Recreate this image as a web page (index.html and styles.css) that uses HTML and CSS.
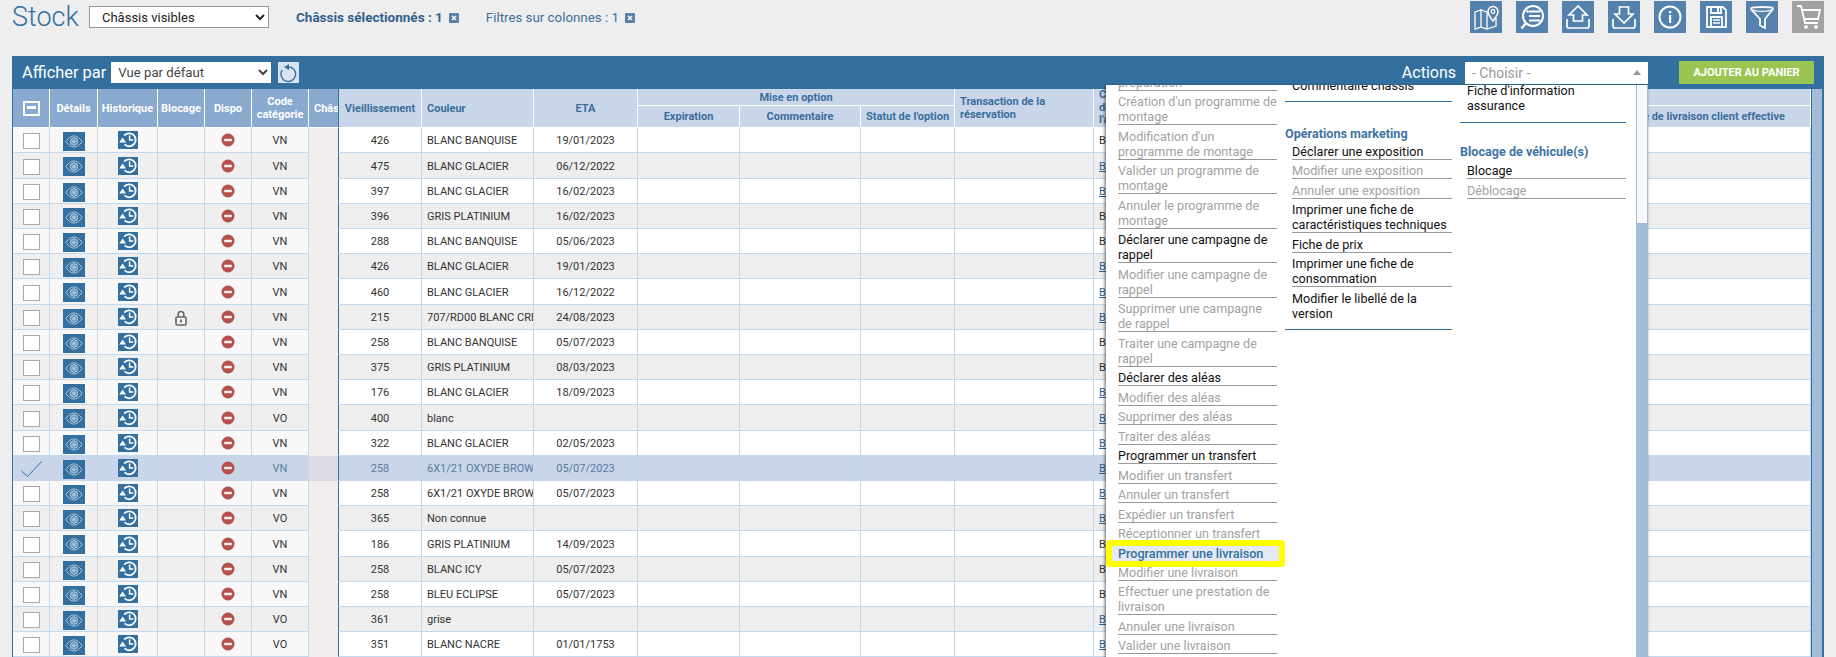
FILE: index.html
```html
<!DOCTYPE html>
<html lang="fr">
<head>
<meta charset="utf-8">
<title>Stock</title>
<link rel="stylesheet" href="styles.css">
</head>
<body>
<svg class="defs" width="0" height="0" aria-hidden="true">
  <defs>
    <symbol id="i-eye" viewBox="0 0 22 19">
      <path d="M3 9.500C6 5.200 8.500 4 11 4s5 1.200 8 5.500C16 13.800 13.500 15 11 15s-5-1.200-8-5.500z" fill="none" stroke="#b4cbde" stroke-width="1"/>
      <circle cx="11" cy="9.500" r="3.800" fill="#6f9abd" stroke="#b4cbde" stroke-width="1"/>
      <circle cx="11" cy="9.500" r="1.800" fill="#a9c3d9"/>
    </symbol>
    <symbol id="i-hist" viewBox="0 0 20 18">
      <path d="M6.200 4.600A6.500 6.500 0 1 1 6.600 13.400" fill="none" stroke="#fff" stroke-width="1.800"/>
      <path d="M4.600 6.600L1.200 11.400h6.800z" fill="#fff"/>
      <path d="M11.600 4.500v4.500h3.700" fill="none" stroke="#fff" stroke-width="1.500"/>
    </symbol>
    <symbol id="i-no" viewBox="0 0 14 14">
      <circle cx="7" cy="7" r="6.500" fill="#b6504f"/>
      <rect x="3.200" y="5.700" width="7.600" height="2.600" rx=".5" fill="#f5f0f0"/>
    </symbol>
    <symbol id="i-x" viewBox="0 0 10 10">
      <rect width="10" height="10" rx="1" fill="#5f80a6"/>
      <path d="M3 3l4 4M7 3l-4 4" stroke="#fff" stroke-width="1.400"/>
    </symbol>
  </defs>
</svg>

<header class="topbar">
  <h1 class="title">Stock</h1>
  <select class="chassis-select"><option>Châssis visibles</option></select>
  <span class="tag tag-strong">Châssis sélectionnés : 1</span>
  <svg class="tag-x"><use href="#i-x"/></svg>
  <span class="tag tag-second">Filtres sur colonnes : 1</span>
  <svg class="tag-x"><use href="#i-x"/></svg>
  <nav class="tools">
    <button class="tool"><svg viewBox="0 0 32 32"><g fill="none" stroke="#fff" stroke-width="1.300"><path d="M5 11l6-2v17l-6 2zM11 9l6 2v17l-6-2zM17 28l9-3v-8"/><path d="M23 20c-3-4-5-6.500-5-9.500a5 5 0 0 1 10 0c0 3-2 5.500-5 9.500z" stroke-width="1.500"/><circle cx="23" cy="10.500" r="1.800"/></g></svg></button>
    <button class="tool"><svg viewBox="0 0 32 32"><g fill="none" stroke="#fff" stroke-width="2"><circle cx="17" cy="15" r="10"/><path d="M10 22l-4.500 5.500" stroke-width="2.400"/></g><path d="M13 10.500h11M13 15h11M13 19.500h11" stroke="#fff" stroke-width="1.800"/><circle cx="11.500" cy="10.500" r="1.200" fill="#fff"/></svg></button>
    <button class="tool"><svg viewBox="0 0 32 32"><g fill="none" stroke="#fff" stroke-width="1.700"><path d="M5 18v7a2 2 0 0 0 2 2h18a2 2 0 0 0 2-2v-7"/><path d="M16 5L7 14h4.500v6h9v-6H25z"/></g></svg></button>
    <button class="tool"><svg viewBox="0 0 32 32"><g fill="none" stroke="#fff" stroke-width="1.700"><path d="M5 18v7a2 2 0 0 0 2 2h18a2 2 0 0 0 2-2v-7"/><path d="M16 22L7 13h4.500V6h9v7H25z"/></g></svg></button>
    <button class="tool"><svg viewBox="0 0 32 32"><circle cx="16" cy="16" r="10.500" fill="none" stroke="#fff" stroke-width="2"/><rect x="15" y="14" width="2.200" height="8" fill="#fff"/><rect x="15" y="10" width="2.200" height="2.200" fill="#fff"/></svg></button>
    <button class="tool"><svg viewBox="0 0 32 32"><g fill="none" stroke="#fff" stroke-width="1.800"><path d="M7 6h16l3 3v17H7z"/><path d="M11 6v6h10V6M11 26V16h11v10"/></g><path d="M13 19h7M13 22h7" stroke="#fff" stroke-width="1.300"/><rect x="17" y="7" width="2" height="4" fill="#fff"/></svg></button>
    <button class="tool"><svg viewBox="0 0 32 32"><g fill="none" stroke="#fff" stroke-width="1.800"><path d="M5 7.500C5 5.500 27 5.500 27 7.500c0 1-1 2-2 3L19 18v9l-5-2.500V18L7 10.500c-1-1-2-2-2-3z"/><path d="M5.500 8.500c5 2.500 16 2.500 21 0" stroke-width="1.300"/></g></svg></button>
    <button class="tool tool-off"><svg viewBox="0 0 32 32"><g fill="none" stroke="#fff" stroke-width="1.800"><path d="M5 5h4l4 17h13"/><path d="M10 9h18l-2 9H12"/></g><circle cx="14" cy="26" r="1.900" fill="#fff"/><circle cx="24" cy="26" r="1.900" fill="#fff"/></svg></button>
  </nav>
</header>

<main class="panel">
  <div class="panel-bar">
    <span class="bar-label">Afficher par</span>
    <select class="view-select"><option>Vue par défaut</option></select>
    <button class="refresh"><svg viewBox="0 0 21 21"><path d="M4.200 8.200A7.300 7.300 0 1 0 10.500 4.900" fill="none" stroke="#33709f" stroke-width="1.400"/><path d="M6 5l5-3v6z" fill="#33709f"/></svg></button>
    <span class="bar-label bar-actions">Actions</span>
    <div class="choose"><span>- Choisir -</span><i class="caret"></i></div>
    <button class="add-cart">AJOUTER AU PANIER</button>
  </div>

  <div class="grid-wrap">
    <table class="grid">
      <colgroup>
        <col class="c-chk"><col class="c-det"><col class="c-his"><col class="c-blo"><col class="c-dis"><col class="c-cod"><col class="c-cha"><col class="c-vie"><col class="c-cou"><col class="c-eta"><col class="c-exp"><col class="c-com"><col class="c-sta"><col class="c-tra"><col class="c-con"><col class="c-dat">
      </colgroup>
      <thead>
        <tr class="h-top">
          <th class="fz" rowspan="2"><span class="head-check"></span></th>
          <th class="fz" rowspan="2">Détails</th>
          <th class="fz" rowspan="2">Historique</th>
          <th class="fz" rowspan="2">Blocage</th>
          <th class="fz" rowspan="2">Dispo</th>
          <th class="fz" rowspan="2">Code catégorie</th>
          <th class="fz fz-end" rowspan="2">Châssis</th>
          <th class="frozen-edge" rowspan="2">Vieillissement</th>
          <th class="left" rowspan="2">Couleur</th>
          <th rowspan="2">ETA</th>
          <th colspan="3">Mise en option</th>
          <th class="left" rowspan="2">Transaction de la réservation</th>
          <th class="left con" rowspan="2">Concession<br>de<br>l'affaire</th>
          <th></th>
        </tr>
        <tr class="h-sub">
          <th>Expiration</th>
          <th>Commentaire</th>
          <th>Statut de l'option</th>
          <th>Date de livraison client effective</th>
        </tr>
      </thead>
      <tbody>
        <tr><td><span class="box"></span></td><td><svg class="tile-eye"><use href="#i-eye"/></svg></td><td><svg class="tile-his"><use href="#i-hist"/></svg></td><td></td><td><svg class="no"><use href="#i-no"/></svg></td><td>VN</td><td class="blur"></td><td class="frozen-edge">426</td><td class="left">BLANC BANQUISE</td><td>19/01/2023</td><td></td><td></td><td></td><td></td><td class="left">B</td><td></td></tr>
        <tr class="tall"><td><span class="box"></span></td><td><svg class="tile-eye"><use href="#i-eye"/></svg></td><td><svg class="tile-his"><use href="#i-hist"/></svg></td><td></td><td><svg class="no"><use href="#i-no"/></svg></td><td>VN</td><td class="blur"></td><td class="frozen-edge">475</td><td class="left">BLANC GLACIER</td><td>06/12/2022</td><td></td><td></td><td></td><td></td><td class="left"><a href="#">B</a></td><td></td></tr>
        <tr><td><span class="box"></span></td><td><svg class="tile-eye"><use href="#i-eye"/></svg></td><td><svg class="tile-his"><use href="#i-hist"/></svg></td><td></td><td><svg class="no"><use href="#i-no"/></svg></td><td>VN</td><td class="blur"></td><td class="frozen-edge">397</td><td class="left">BLANC GLACIER</td><td>16/02/2023</td><td></td><td></td><td></td><td></td><td class="left"><a href="#">B</a></td><td></td></tr>
        <tr><td><span class="box"></span></td><td><svg class="tile-eye"><use href="#i-eye"/></svg></td><td><svg class="tile-his"><use href="#i-hist"/></svg></td><td></td><td><svg class="no"><use href="#i-no"/></svg></td><td>VN</td><td class="blur"></td><td class="frozen-edge">396</td><td class="left">GRIS PLATINIUM</td><td>16/02/2023</td><td></td><td></td><td></td><td></td><td class="left">B</td><td></td></tr>
        <tr><td><span class="box"></span></td><td><svg class="tile-eye"><use href="#i-eye"/></svg></td><td><svg class="tile-his"><use href="#i-hist"/></svg></td><td></td><td><svg class="no"><use href="#i-no"/></svg></td><td>VN</td><td class="blur"></td><td class="frozen-edge">288</td><td class="left">BLANC BANQUISE</td><td>05/06/2023</td><td></td><td></td><td></td><td></td><td class="left">B</td><td></td></tr>
        <tr><td><span class="box"></span></td><td><svg class="tile-eye"><use href="#i-eye"/></svg></td><td><svg class="tile-his"><use href="#i-hist"/></svg></td><td></td><td><svg class="no"><use href="#i-no"/></svg></td><td>VN</td><td class="blur"></td><td class="frozen-edge">426</td><td class="left">BLANC GLACIER</td><td>19/01/2023</td><td></td><td></td><td></td><td></td><td class="left"><a href="#">B</a></td><td></td></tr>
        <tr class="tall"><td><span class="box"></span></td><td><svg class="tile-eye"><use href="#i-eye"/></svg></td><td><svg class="tile-his"><use href="#i-hist"/></svg></td><td></td><td><svg class="no"><use href="#i-no"/></svg></td><td>VN</td><td class="blur"></td><td class="frozen-edge">460</td><td class="left">BLANC GLACIER</td><td>16/12/2022</td><td></td><td></td><td></td><td></td><td class="left"><a href="#">B</a></td><td></td></tr>
        <tr><td><span class="box"></span></td><td><svg class="tile-eye"><use href="#i-eye"/></svg></td><td><svg class="tile-his"><use href="#i-hist"/></svg></td><td><svg class="lock" viewBox="0 0 14 16"><path d="M4.200 7V4.300a2.800 2.800 0 0 1 5.600 0V7" fill="none" stroke="#666" stroke-width="1.600"/><rect x="2" y="7" width="10" height="8" rx="1" fill="#f4f4f4" stroke="#666" stroke-width="1.600"/><path d="M7 9.500v3" stroke="#666" stroke-width="1.800"/></svg></td><td><svg class="no"><use href="#i-no"/></svg></td><td>VN</td><td class="blur"></td><td class="frozen-edge">215</td><td class="left"><span class="clip">707/RD00 BLANC CREME</span></td><td>24/08/2023</td><td></td><td></td><td></td><td></td><td class="left"><a href="#">B</a></td><td></td></tr>
        <tr><td><span class="box"></span></td><td><svg class="tile-eye"><use href="#i-eye"/></svg></td><td><svg class="tile-his"><use href="#i-hist"/></svg></td><td></td><td><svg class="no"><use href="#i-no"/></svg></td><td>VN</td><td class="blur"></td><td class="frozen-edge">258</td><td class="left">BLANC BANQUISE</td><td>05/07/2023</td><td></td><td></td><td></td><td></td><td class="left">B</td><td></td></tr>
        <tr><td><span class="box"></span></td><td><svg class="tile-eye"><use href="#i-eye"/></svg></td><td><svg class="tile-his"><use href="#i-hist"/></svg></td><td></td><td><svg class="no"><use href="#i-no"/></svg></td><td>VN</td><td class="blur"></td><td class="frozen-edge">375</td><td class="left">GRIS PLATINIUM</td><td>08/03/2023</td><td></td><td></td><td></td><td></td><td class="left">B</td><td></td></tr>
        <tr><td><span class="box"></span></td><td><svg class="tile-eye"><use href="#i-eye"/></svg></td><td><svg class="tile-his"><use href="#i-hist"/></svg></td><td></td><td><svg class="no"><use href="#i-no"/></svg></td><td>VN</td><td class="blur"></td><td class="frozen-edge">176</td><td class="left">BLANC GLACIER</td><td>18/09/2023</td><td></td><td></td><td></td><td></td><td class="left"><a href="#">B</a></td><td></td></tr>
        <tr class="tall"><td><span class="box"></span></td><td><svg class="tile-eye"><use href="#i-eye"/></svg></td><td><svg class="tile-his"><use href="#i-hist"/></svg></td><td></td><td><svg class="no"><use href="#i-no"/></svg></td><td>VO</td><td class="blur"></td><td class="frozen-edge">400</td><td class="left">blanc</td><td></td><td></td><td></td><td></td><td></td><td class="left"><a href="#">B</a></td><td></td></tr>
        <tr><td><span class="box"></span></td><td><svg class="tile-eye"><use href="#i-eye"/></svg></td><td><svg class="tile-his"><use href="#i-hist"/></svg></td><td></td><td><svg class="no"><use href="#i-no"/></svg></td><td>VN</td><td class="blur"></td><td class="frozen-edge">322</td><td class="left">BLANC GLACIER</td><td>02/05/2023</td><td></td><td></td><td></td><td></td><td class="left"><a href="#">B</a></td><td></td></tr>
        <tr class="sel"><td><svg class="tick" viewBox="0 0 21 16"><path d="M0.500 10l6 5.500L20.500 0.500" fill="none" stroke="#33709f" stroke-width="1"/></svg></td><td><svg class="tile-eye"><use href="#i-eye"/></svg></td><td><svg class="tile-his"><use href="#i-hist"/></svg></td><td></td><td><svg class="no"><use href="#i-no"/></svg></td><td>VN</td><td class="blur"></td><td class="frozen-edge">258</td><td class="left"><span class="clip">6X1/21 OXYDE BROWN</span></td><td>05/07/2023</td><td></td><td></td><td></td><td></td><td class="left"><a href="#">B</a></td><td></td></tr>
        <tr><td><span class="box"></span></td><td><svg class="tile-eye"><use href="#i-eye"/></svg></td><td><svg class="tile-his"><use href="#i-hist"/></svg></td><td></td><td><svg class="no"><use href="#i-no"/></svg></td><td>VN</td><td class="blur"></td><td class="frozen-edge">258</td><td class="left"><span class="clip">6X1/21 OXYDE BROWN</span></td><td>05/07/2023</td><td></td><td></td><td></td><td></td><td class="left"><a href="#">B</a></td><td></td></tr>
        <tr><td><span class="box"></span></td><td><svg class="tile-eye"><use href="#i-eye"/></svg></td><td><svg class="tile-his"><use href="#i-hist"/></svg></td><td></td><td><svg class="no"><use href="#i-no"/></svg></td><td>VO</td><td class="blur"></td><td class="frozen-edge">365</td><td class="left">Non connue</td><td></td><td></td><td></td><td></td><td></td><td class="left"><a href="#">B</a></td><td></td></tr>
        <tr class="tall"><td><span class="box"></span></td><td><svg class="tile-eye"><use href="#i-eye"/></svg></td><td><svg class="tile-his"><use href="#i-hist"/></svg></td><td></td><td><svg class="no"><use href="#i-no"/></svg></td><td>VN</td><td class="blur"></td><td class="frozen-edge">186</td><td class="left">GRIS PLATINIUM</td><td>14/09/2023</td><td></td><td></td><td></td><td></td><td class="left">B</td><td></td></tr>
        <tr><td><span class="box"></span></td><td><svg class="tile-eye"><use href="#i-eye"/></svg></td><td><svg class="tile-his"><use href="#i-hist"/></svg></td><td></td><td><svg class="no"><use href="#i-no"/></svg></td><td>VN</td><td class="blur"></td><td class="frozen-edge">258</td><td class="left">BLANC ICY</td><td>05/07/2023</td><td></td><td></td><td></td><td></td><td class="left">B</td><td></td></tr>
        <tr><td><span class="box"></span></td><td><svg class="tile-eye"><use href="#i-eye"/></svg></td><td><svg class="tile-his"><use href="#i-hist"/></svg></td><td></td><td><svg class="no"><use href="#i-no"/></svg></td><td>VN</td><td class="blur"></td><td class="frozen-edge">258</td><td class="left">BLEU ECLIPSE</td><td>05/07/2023</td><td></td><td></td><td></td><td></td><td class="left">B</td><td></td></tr>
        <tr><td><span class="box"></span></td><td><svg class="tile-eye"><use href="#i-eye"/></svg></td><td><svg class="tile-his"><use href="#i-hist"/></svg></td><td></td><td><svg class="no"><use href="#i-no"/></svg></td><td>VO</td><td class="blur"></td><td class="frozen-edge">361</td><td class="left">grise</td><td></td><td></td><td></td><td></td><td></td><td class="left"><a href="#">B</a></td><td></td></tr>
        <tr><td><span class="box"></span></td><td><svg class="tile-eye"><use href="#i-eye"/></svg></td><td><svg class="tile-his"><use href="#i-hist"/></svg></td><td></td><td><svg class="no"><use href="#i-no"/></svg></td><td>VO</td><td class="blur"></td><td class="frozen-edge">351</td><td class="left">BLANC NACRE</td><td>01/01/1753</td><td></td><td></td><td></td><td></td><td class="left"><a href="#">B</a></td><td></td></tr>
      </tbody>
    </table>
    <div class="grid-scroll"></div>
  </div>

  <div class="menu">
    <div class="menu-cols">
      <div class="menu-col col-a">
        <ul class="items">
          <li class="off">préparation</li>
          <li class="off">Création d'un programme de montage</li>
          <li class="off">Modification d'un programme de montage</li>
          <li class="off">Valider un programme de montage</li>
          <li class="off">Annuler le programme de montage</li>
          <li>Déclarer une campagne de rappel</li>
          <li class="off">Modifier une campagne de rappel</li>
          <li class="off">Supprimer une campagne de rappel</li>
          <li class="off">Traiter une campagne de rappel</li>
          <li>Déclarer des aléas</li>
          <li class="off">Modifier des aléas</li>
          <li class="off">Supprimer des aléas</li>
          <li class="off">Traiter des aléas</li>
          <li>Programmer un transfert</li>
          <li class="off">Modifier un transfert</li>
          <li class="off">Annuler un transfert</li>
          <li class="off">Expédier un transfert</li>
          <li class="off">Réceptionner un transfert</li>
          <li class="hot">Programmer une livraison</li>
          <li class="off">Modifier une livraison</li>
          <li class="off">Effectuer une prestation de livraison</li>
          <li class="off">Annuler une livraison</li>
          <li class="off">Valider une livraison</li>
        </ul>
      </div>
      <div class="menu-col col-b">
        <ul class="items items-end">
          <li>Commentaire châssis</li>
        </ul>
        <h3 class="group group-b">Opérations marketing</h3>
        <ul class="items items-end">
          <li>Déclarer une exposition</li>
          <li class="off">Modifier une exposition</li>
          <li class="off">Annuler une exposition</li>
          <li>Imprimer une fiche de caractéristiques techniques</li>
          <li>Fiche de prix</li>
          <li>Imprimer une fiche de consommation</li>
          <li>Modifier le libellé de la version</li>
        </ul>
      </div>
      <div class="menu-col col-c">
        <ul class="items items-end">
          <li>Fiche d'information assurance</li>
        </ul>
        <h3 class="group group-c">Blocage de véhicule(s)</h3>
        <ul class="items">
          <li>Blocage</li>
          <li class="off">Déblocage</li>
        </ul>
      </div>
    </div>
    <div class="menu-scroll"><div class="menu-thumb"></div></div>
  </div>
</main>
</body>
</html>
```
FILE: styles.css
```css
* { box-sizing: border-box; }
html, body { margin: 0; height: 657px; overflow: hidden; }
body { background: #eeeeee; font-family: Roboto, "Liberation Sans", sans-serif; font-size: 12px; color: #222; position: relative; }
.defs { position: absolute; }
button { border: 0; padding: 0; margin: 0; font-family: inherit; }

.topbar { height: 56px; padding: 0 12px; display: flex; align-items: flex-start; }
.title { margin: 0 10px 0 0; font-size: 27px; font-weight: 300; color: #33709f; line-height: 34px; width: 67px; }
.chassis-select { width: 180px; height: 22px; margin-top: 6px; font: 13px Roboto, sans-serif; padding-left: 8px; background: #fff; border: 1px solid #999; color: #222; border-radius: 0; }
.tag { font-size: 13.500px; color: #3f6f98; margin-top: 10px; line-height: 15px; }
.tag-strong { font-weight: 700; margin-left: 27px; color: #33608a; }
.tag-second { margin-left: 27px; font-size: 13.300px; }
.tag-x { width: 10px; height: 10px; margin: 13px 0 0 6px; }
.tools { margin-left: auto; display: flex; gap: 14px; padding-top: 1px; }
.tool { width: 32px; height: 32px; background: #5582ac; display: block; }
.tool svg { width: 32px; height: 32px; display: block; }
.tool-off { background: #a2a2a2; }

.panel { position: absolute; left: 12px; top: 56px; width: 1812px; height: 601px; background: #33709f; }
.panel-bar { height: 33px; display: flex; align-items: flex-start; padding: 6px 10px 0 10px; }
.bar-label { color: #fff; font-size: 16.400px; line-height: 22px; }
.view-select { width: 160px; height: 21px; margin-left: 5px; border: 0; background: #fff; color: #444; font: 13.200px Roboto, sans-serif; padding-left: 3px; border-radius: 0; }
.refresh { width: 21px; height: 21px; margin-left: 7px; background: #d8e3ee; display: block; }
.refresh svg { width: 21px; height: 21px; display: block; }
.bar-actions { margin-left: auto; margin-right: 9px; font-size: 16px; }
.choose { width: 183px; height: 22px; background: #fff; color: #999; font-size: 14px; line-height: 23px; padding-left: 7px; position: relative; }
.caret { position: absolute; right: 7px; top: 8px; border: 4px solid transparent; border-top: 0; border-bottom: 5px solid #999; }
.add-cart { width: 135px; height: 23px; margin: -1px 0 0 31px; background: #9bc552; color: #fff; font-size: 11px; font-weight: 700; }

.grid-wrap { display: flex; padding-left: 1px; height: 568px; overflow: hidden; }
.grid { table-layout: fixed; width: 1798px; border-collapse: separate; border-spacing: 0; flex: none; font-size: 11px; align-self: flex-start; }
.c-chk { width: 37px; } .c-det { width: 48px; } .c-his { width: 60px; } .c-blo { width: 47px; } .c-dis { width: 47px; } .c-cod { width: 57px; } .c-cha { width: 29px; }
.c-vie { width: 84px; } .c-cou { width: 112px; } .c-eta { width: 104px; } .c-exp { width: 102px; } .c-com { width: 121px; } .c-sta { width: 94px; } .c-tra { width: 139px; } .c-con { width: 507px; } .c-dat { width: 210px; }
.grid-scroll { width: 10px; margin-left: 1px; background: #a2bcd9; flex: none; }

.h-top { height: 17px; }
.h-sub { height: 22px; }
.grid th { background: #c9d6ea; color: #3b6d9b; font-size: 11px; font-weight: 700; line-height: 13px; border-right: 1px solid #fff; border-bottom: 1px solid #fff; padding: 0 2px; overflow: hidden; text-align: center; }
.grid th.fz { background: #8aa9cf; color: #fff; }
.grid th.fz-end { border-right: 0; white-space: nowrap; text-align: left; padding-left: 5px; }
.grid th.left { text-align: left; padding-left: 5px; }
.grid th.con { line-height: 12.600px; }
.grid th.frozen-edge { border-left: 1px solid #33709f; }
.head-check { display: block; width: 17px; height: 15px; margin: 0 auto; border: 2px solid #fff; position: relative; }
.head-check::after { content: ""; position: absolute; left: 2px; right: 2px; top: 3px; height: 3px; background: #fff; }

.grid tbody tr { height: 25px; }
.grid tbody tr.tall { height: 26px; }
.grid td { padding: 2px 0 0; text-align: center; vertical-align: middle; border-right: 1px solid #c3d9ee; border-bottom: 1px solid #c3d9ee; background: #fff; color: #333; overflow: hidden; white-space: nowrap; line-height: 14px; }
.grid tbody tr:nth-child(even) td { background: #eeeeee; }
.grid tbody tr td:nth-child(-n+6) { background: #f8f8f8; }
.grid tbody tr:nth-child(even) td:nth-child(-n+6) { background: #efefef; }
.grid tbody tr.sel td, .grid tbody tr.sel td:nth-child(-n+6) { background: #c9d6ea; color: #5a7a9c; border-bottom-color: #c9d6ea; }
.grid td.left { text-align: left; padding-left: 5px; }
.grid td.frozen-edge { border-left: 1px solid #33709f; }
.grid tbody tr td.blur { background: #f3eeee; border-right: 0; border-bottom: 0; }
.grid tbody tr.sel td.blur { background: #dddbe6; }
.clip { display: block; overflow: hidden; }
.grid a { color: #2a6496; }
.box { display: block; width: 17px; height: 16px; margin: 0 auto; border: 1px solid #a9a9a9; background: #fff; }
.tile-eye { display: block; width: 22px; height: 19px; margin: 0 auto; background: #33709f; }
.tile-his { display: block; width: 20px; height: 18px; margin: -2px auto 0; background: #33709f; }
.no { display: block; width: 14px; height: 14px; margin: -2px auto 0; }
.lock { display: block; width: 14px; height: 16px; margin: 0 auto; }
.tick { display: block; width: 21px; height: 16px; margin: 0 auto; }

.menu { position: absolute; left: 1094px; top: 29px; width: 542px; height: 580px; background: #fff; box-shadow: -1px 1px 3px rgba(0,0,0,.6); display: flex; overflow: hidden; }
.menu-cols { flex: 1; display: flex; align-items: flex-start; font-size: 12.600px; line-height: 15px; }
.menu-col { flex: none; }
.col-a { width: 171px; padding-left: 12px; margin-top: -14px; }
.col-b { width: 175px; padding-left: 8px; margin-top: -11px; }
.col-c { width: 174px; padding-left: 8px; margin-top: -5.400px; }
.items { list-style: none; margin: 0; padding: 0; }
.items li { padding-top: 3.500px; border-bottom: 1px solid #999; color: #111; }
.items li.off { color: #a2a2a2; }
.items li.hot { background: #e4e9f3; color: #33709f; font-weight: 500; box-shadow: 0 0 0 6px #ffff00; border-radius: 1px; border-bottom: 0; position: relative; z-index: 1; margin: 3.500px -2px .5px -6px; padding: 0 0 0 6px; }
.items-end { border-bottom: 1px solid #33709f; }
.items-end li:last-child { border-bottom: 0; padding-bottom: 8.500px; }
.col-b li, .col-c li { margin-left: 7px; }
.group { margin: 22px 0 0; font-size: 12.600px; line-height: 16px; font-weight: 700; color: #3f73a5; }
.group-b { margin: 24px 0 -2px; }
.group-c { margin-top: 21px; }
.menu-scroll { width: 12px; background: #f8f8f8; border-left: 1px solid #a2bcd9; border-right: 1px solid #a2bcd9; flex: none; padding-top: 138px; }
.menu-thumb { height: 100%; background: #a2bcd9; }
```
